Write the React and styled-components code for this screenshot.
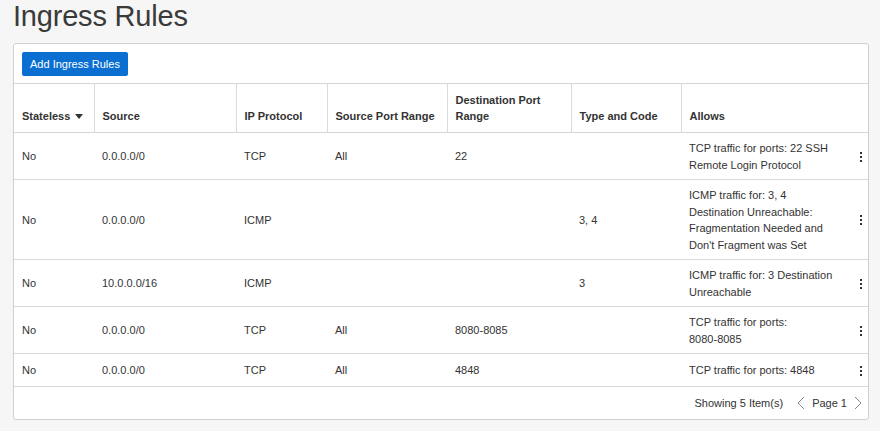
import React from 'react';
import styled, { createGlobalStyle } from 'styled-components';

const GlobalStyle = createGlobalStyle`
  body {
    margin: 0;
    background: #f6f6f6;
    font-family: "Liberation Sans", Arial, sans-serif;
    color: #333;
  }
`;

const Page = styled.div`
  padding: 0 11px 0 13px;
`;

const Title = styled.h1`
  margin: 0 0 11px;
  font-size: 29px;
  line-height: 32px;
  font-weight: normal;
  color: #3a3a3a;
  letter-spacing: -0.2px;
`;

const Panel = styled.div`
  background: #fff;
  border: 1px solid #cfcfcf;
  border-radius: 3px;
`;

const Toolbar = styled.div`
  display: flex;
  align-items: center;
  padding: 8px 8px 7px;
  height: 24px;
`;

const Button = styled.button`
  height: 24px;
  padding: 0 8px;
  background: #0b6fd2;
  color: #fff;
  border: none;
  border-radius: 2px;
  font-family: inherit;
  font-size: 11px;
  cursor: pointer;
`;

const Table = styled.table`
  width: 100%;
  border-collapse: collapse;
  table-layout: fixed;
  font-size: 11px;
  line-height: 16.5px;
`;

const Th = styled.th`
  text-align: left;
  vertical-align: bottom;
  font-weight: bold;
  line-height: 16px;
  padding: 8px;
  border-top: 1px solid #d6d6d6;
  border-bottom: 1px solid #d6d6d6;
  border-left: ${p => (p.$first ? 'none' : '1px solid #dcdcdc')};
  color: #333;
`;

const Caret = styled.svg`
  margin-left: 5px;
  vertical-align: 1px;
`;

const Row = styled.tr`
  height: 33px;
`;

const Td = styled.td`
  vertical-align: middle;
  padding: 7px 8px 6px;
  border-bottom: 1px solid #d9d9d9;
  color: #333;
`;

const AllowsCell = styled.div`
  display: flex;
  align-items: center;
  justify-content: space-between;
`;

const AllowsText = styled.span`
  width: 150px;
`;

const Kebab = styled.span`
  display: flex;
  flex-direction: column;
  gap: 2px;
  margin-right: -2px;
  span {
    width: 2px;
    height: 2px;
    background: #333;
  }
`;

const Footer = styled.div`
  display: flex;
  justify-content: flex-end;
  align-items: center;
  height: 32px;
  padding: 0 6px 0 8px;
  font-size: 11px;
  color: #333;
`;

const Pager = styled.div`
  display: flex;
  align-items: center;
  gap: 7px;
  margin-left: 14px;
`;

// \u2060 keeps the port range from breaking after its hyphen
const rules = [
  { src: '0.0.0.0/0', proto: 'TCP', sport: 'All', dport: '22', type: '', allows: 'TCP traffic for ports: 22 SSH Remote Login Protocol' },
  { src: '0.0.0.0/0', proto: 'ICMP', sport: '', dport: '', type: '3, 4', allows: "ICMP traffic for: 3, 4 Destination Unreachable: Fragmentation Needed and Don't Fragment was Set" },
  { src: '10.0.0.0/16', proto: 'ICMP', sport: '', dport: '', type: '3', allows: 'ICMP traffic for: 3 Destination Unreachable' },
  { src: '0.0.0.0/0', proto: 'TCP', sport: 'All', dport: '8080-8085', type: '', allows: 'TCP traffic for ports: 8080-\u20608085' },
  { src: '0.0.0.0/0', proto: 'TCP', sport: 'All', dport: '4848', type: '', allows: 'TCP traffic for ports: 4848' },
];

const Chevron = ({ dir }) => (
  <svg width="8" height="14" viewBox="0 0 8 14">
    <polyline
      points={dir === 'left' ? '7,1 1,7 7,13' : '1,1 7,7 1,13'}
      fill="none"
      stroke="#888"
      strokeWidth="1"
    />
  </svg>
);

export default function App() {
  return (
    <Page>
      <GlobalStyle />
      <Title>Ingress Rules</Title>
      <Panel>
        <Toolbar>
          <Button>Add Ingress Rules</Button>
        </Toolbar>
        <Table>
          <colgroup>
            <col style={{ width: 80 }} />
            <col style={{ width: 142 }} />
            <col style={{ width: 91 }} />
            <col style={{ width: 120 }} />
            <col style={{ width: 124 }} />
            <col style={{ width: 110 }} />
            <col />
          </colgroup>
          <thead>
            <tr>
              <Th $first>
                Stateless
                <Caret width="8" height="5" viewBox="0 0 8 5">
                  <polygon points="0,0 8,0 4,5" fill="#333" />
                </Caret>
              </Th>
              <Th>Source</Th>
              <Th>IP Protocol</Th>
              <Th>Source Port Range</Th>
              <Th>Destination Port Range</Th>
              <Th>Type and Code</Th>
              <Th>Allows</Th>
            </tr>
          </thead>
          <tbody>
            {rules.map((r, i) => (
              <Row key={i}>
                <Td>No</Td>
                <Td>{r.src}</Td>
                <Td>{r.proto}</Td>
                <Td>{r.sport}</Td>
                <Td>{r.dport}</Td>
                <Td>{r.type}</Td>
                <Td>
                  <AllowsCell>
                    <AllowsText>{r.allows}</AllowsText>
                    <Kebab>
                      <span />
                      <span />
                      <span />
                    </Kebab>
                  </AllowsCell>
                </Td>
              </Row>
            ))}
          </tbody>
        </Table>
        <Footer>
          Showing 5 Item(s)
          <Pager>
            <Chevron dir="left" />
            Page 1
            <Chevron dir="right" />
          </Pager>
        </Footer>
      </Panel>
    </Page>
  );
}
